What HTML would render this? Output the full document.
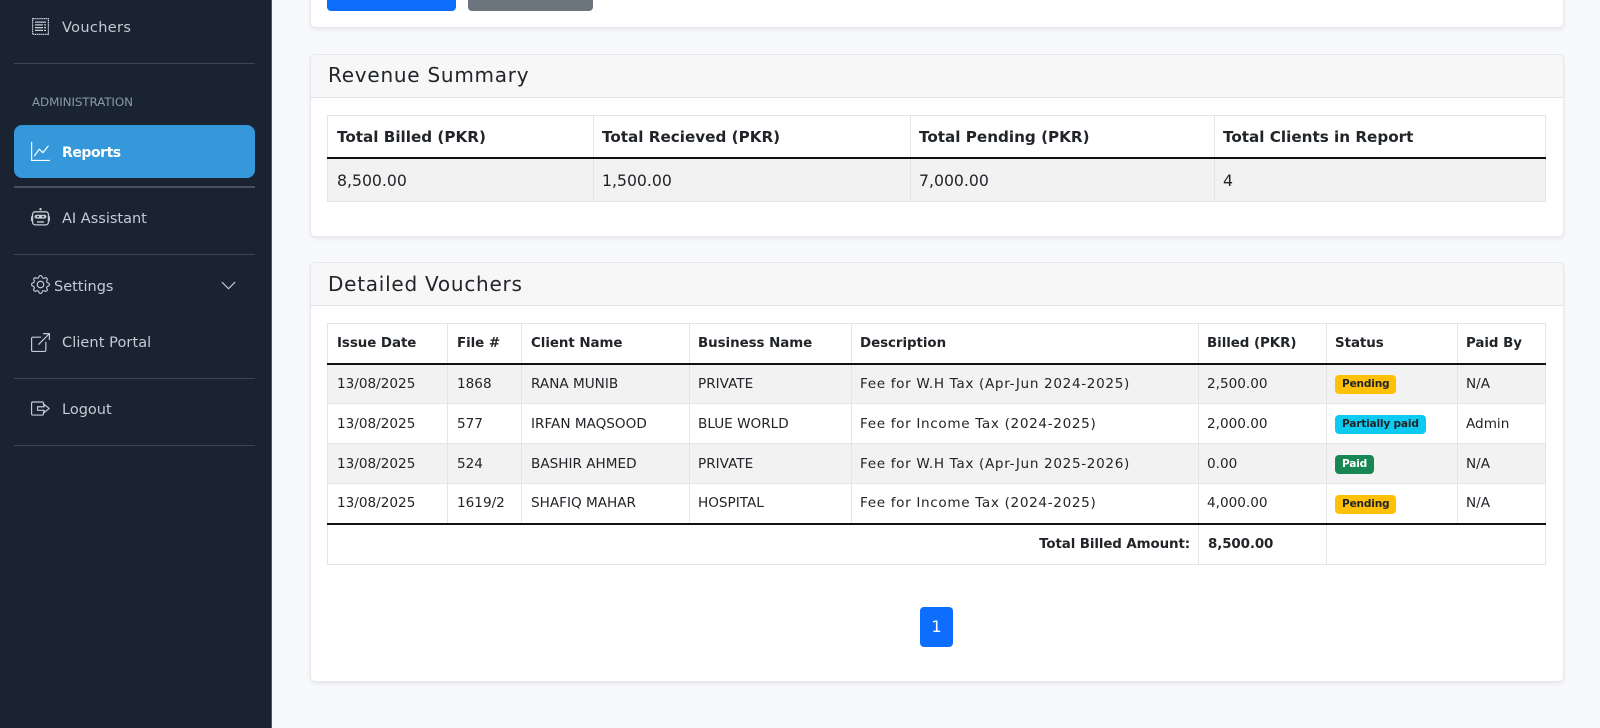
<!DOCTYPE html>
<html lang="en"><head><meta charset="utf-8"><title>Reports</title>
<style>
*{box-sizing:border-box}
html,body{margin:0;width:1600px;height:728px;overflow:hidden;background:#f8f9fc;font-family:"DejaVu Sans","Liberation Sans",sans-serif;color:#212529}
.abs{position:absolute}
#side{position:absolute;left:0;top:0;width:272px;height:728px;background:#1a2332;border-right:1px solid #4a5666}
.hr{position:absolute;left:14px;width:241px;height:1px;background:#3b4554}
.nav{position:absolute;font-size:14.5px;color:#c3cbd3;line-height:20px;white-space:nowrap}
.ic{position:absolute;fill:#c3cbd3}
.active{position:absolute;left:14px;top:125px;width:241px;height:53px;background:#3498db;border-radius:8px}
.card{position:absolute;left:310px;width:1254px;background:#fff;border:1px solid #e6e8ea;border-radius:5px;box-shadow:0 2px 4px rgba(0,0,0,.07)}
.ch{position:absolute;left:0;top:0;right:0;height:43px;background:#f7f7f7;border-bottom:1px solid #e3e4e6;border-radius:5px 5px 0 0;font-size:20px;line-height:41px;padding-left:17px;white-space:nowrap;letter-spacing:.75px}
table{position:absolute;border-collapse:collapse;table-layout:fixed;color:#212529}
th,td{border:1px solid #e3e6e9;padding:0 0 0 8px;text-align:left;white-space:nowrap;overflow:hidden;vertical-align:middle}
th:nth-child(-n+3),td:nth-child(-n+3){padding-left:9px}
th{font-weight:700}
.t1 th{font-size:15.2px;letter-spacing:0;height:42px;border-bottom:2px solid #111;padding-top:2px}
.t1 td{font-size:15.7px;height:44px;background:#f2f2f2;padding-top:2px}
.t1 th:nth-child(-n+4),.t1 td:nth-child(-n+4){padding-left:9px}
.t1 th:nth-child(n+2),.t1 td:nth-child(n+2){padding-left:8px}
.t2{font-size:13.6px}
.t2 th{font-size:13.4px;letter-spacing:-.05px;height:40px;border-bottom:2px solid #111}
.t2 td{height:40px}
.t2 tr.s td{background:#f2f2f2}
.t2 td.d{letter-spacing:.65px}
.t2 tfoot td{font-weight:700;font-size:13.4px;letter-spacing:-.1px;border-top:2px solid #111;height:41px}
.b{display:inline-block;height:19px;line-height:19px;border-radius:4px;font-size:10.6px;font-weight:700;padding:0 7px;letter-spacing:-.2px;vertical-align:middle;position:relative;top:1px}
.y{background:#ffc107;color:#212529}.c{background:#0dcaf0;color:#212529}.g{background:#198754;color:#fff}
</style></head><body>
<aside id="side">
 <svg class="ic" style="left:32px;top:18px" width="17" height="17" viewBox="0 0 17 17"><path fill="none" stroke="#c3cbd3" stroke-width="1.2" stroke-dasharray="1.4 .5" d="M.6.6h15.8v15.8H.6z"/><path d="M3 3.5h11v1.2H3zM3 6.3h8v1.2H3zM12 6.3h2v1.2h-2zM3 9h8v1.2H3zM12 9h2v1.2h-2zM3 11.8h8V13H3zM12 11.8h2V13h-2z"/></svg>
 <div class="nav" style="left:62px;top:18px;letter-spacing:.35px">Vouchers</div>
 <div class="hr" style="top:63px"></div>
 <div class="nav" style="left:32px;top:92px;font-size:11.9px;color:#8b98a5;letter-spacing:-.1px">ADMINISTRATION</div>
 <div class="active"></div>
 <svg class="ic" style="left:31px;top:142px;fill:#fff" width="19" height="19" viewBox="0 0 16 16"><path fill-rule="evenodd" d="M0 0h1v15h15v1H0zm14.817 3.113a.5.5 0 0 1 .07.704l-4.5 5.5a.5.5 0 0 1-.74.037L7.06 6.767l-3.656 5.027a.5.5 0 0 1-.808-.588l4-5.5a.5.5 0 0 1 .758-.06l2.609 2.61 4.15-5.073a.5.5 0 0 1 .704-.07"/></svg>
 <div class="nav" style="left:62px;top:143px;color:#fff;font-weight:700;font-size:14px;letter-spacing:-.45px">Reports</div>
 <div class="hr" style="top:186px;height:2px;background:#46505e"></div>
 <svg class="ic" style="left:31px;top:208px" width="19" height="19" viewBox="0 0 16 16"><path d="M7.5 0h1v2h-1z"/><circle cx="8" cy="1" r="1"/><path fill="none" stroke="#c3cbd3" stroke-width="1.1" d="M3.5 3.2h9c1.4 0 2.2 1.2 2.2 2.4v6.2c0 1.4-1 2.4-2.4 2.4H3.7c-1.4 0-2.4-1-2.4-2.4V5.6c0-1.3.9-2.4 2.2-2.4z"/><path d="M0 7h1v4H0zM15 7h1v4h-1z"/><path d="M4.6 5.7h6.8c1 0 1.6.8 1.6 1.6s-.7 1.6-1.6 1.6H4.6C3.7 8.9 3 8.2 3 7.3s.7-1.6 1.6-1.6zM5 11.2h6v1.1H5z"/><path fill="#1a2332" d="M5 6.8h1.7v1H5zM9.3 6.8H11v1H9.3z"/></svg>
 <div class="nav" style="left:62px;top:209px">AI Assistant</div>
 <div class="hr" style="top:254px"></div>
 <svg class="ic" style="left:31px;top:275px" width="19" height="19" viewBox="0 0 16 16"><path d="M8 4.754a3.246 3.246 0 1 0 0 6.492 3.246 3.246 0 0 0 0-6.492M5.754 8a2.246 2.246 0 1 1 4.492 0 2.246 2.246 0 0 1-4.492 0"/><path d="M9.796 1.343c-.527-1.79-3.065-1.79-3.592 0l-.094.319a.873.873 0 0 1-1.255.52l-.292-.16c-1.64-.892-3.433.902-2.54 2.541l.159.292a.873.873 0 0 1-.52 1.255l-.319.094c-1.79.527-1.79 3.065 0 3.592l.319.094a.873.873 0 0 1 .52 1.255l-.16.292c-.892 1.64.901 3.434 2.541 2.54l.292-.159a.873.873 0 0 1 1.255.52l.094.319c.527 1.79 3.065 1.79 3.592 0l.094-.319a.873.873 0 0 1 1.255-.52l.292.16c1.64.893 3.434-.902 2.54-2.541l-.159-.292a.873.873 0 0 1 .52-1.255l.319-.094c1.79-.527 1.79-3.065 0-3.592l-.319-.094a.873.873 0 0 1-.52-1.255l.16-.292c.893-1.64-.902-3.433-2.541-2.54l-.292.159a.873.873 0 0 1-1.255-.52zm-2.633.283c.246-.835 1.428-.835 1.674 0l.094.319a1.873 1.873 0 0 0 2.693 1.115l.291-.16c.764-.415 1.6.42 1.184 1.185l-.159.292a1.873 1.873 0 0 0 1.116 2.692l.318.094c.835.246.835 1.428 0 1.674l-.319.094a1.873 1.873 0 0 0-1.115 2.693l.16.291c.415.764-.42 1.6-1.185 1.184l-.291-.159a1.873 1.873 0 0 0-2.693 1.116l-.094.318c-.246.835-1.428.835-1.674 0l-.094-.319a1.873 1.873 0 0 0-2.692-1.115l-.292.16c-.764.415-1.6-.42-1.184-1.185l.159-.291A1.873 1.873 0 0 0 1.945 8.93l-.319-.094c-.835-.246-.835-1.428 0-1.674l.319-.094A1.873 1.873 0 0 0 3.06 4.377l-.16-.292c-.415-.764.42-1.6 1.185-1.184l.292.159a1.873 1.873 0 0 0 2.692-1.115z"/></svg>
 <div class="nav" style="left:54px;top:277px">Settings</div>
 <svg class="ic" style="left:220px;top:277px" width="17" height="17" viewBox="0 0 16 16"><path fill-rule="evenodd" d="M1.646 4.646a.5.5 0 0 1 .708 0L8 10.293l5.646-5.647a.5.5 0 0 1 .708.708l-6 6a.5.5 0 0 1-.708 0l-6-6a.5.5 0 0 1 0-.708"/></svg>
 <svg class="ic" style="left:31px;top:333px" width="19" height="19" viewBox="0 0 16 16"><path fill-rule="evenodd" d="M8.636 3.5a.5.5 0 0 0-.5-.5H1.5A1.5 1.5 0 0 0 0 4.5v10A1.5 1.5 0 0 0 1.5 16h10a1.5 1.5 0 0 0 1.5-1.5V7.864a.5.5 0 0 0-1 0V14.5a.5.5 0 0 1-.5.5h-10a.5.5 0 0 1-.5-.5v-10a.5.5 0 0 1 .5-.5h6.636a.5.5 0 0 0 .5-.5"/><path fill-rule="evenodd" d="M16 .5a.5.5 0 0 0-.5-.5h-5a.5.5 0 0 0 0 1h3.793L6.146 9.146a.5.5 0 1 0 .708.708L15 1.707V5.5a.5.5 0 0 0 1 0z"/></svg>
 <div class="nav" style="left:62px;top:333px;letter-spacing:.08px">Client Portal</div>
 <div class="hr" style="top:378px"></div>
 <svg class="ic" style="left:31px;top:399px;fill:none;stroke:#c3cbd3;stroke-width:1" width="19" height="19" viewBox="0 0 16 16"><path d="M10.5 5.5v-2a1 1 0 0 0-1-1h-8a1 1 0 0 0-1 1v9a1 1 0 0 0 1 1h8a1 1 0 0 0 1-1v-2"/><path stroke-linejoin="round" d="M5.5 6.5h5.6V4.6L15.3 8l-4.2 3.4V9.5H5.5z"/></svg>
 <div class="nav" style="left:62px;top:400px">Logout</div>
 <div class="hr" style="top:445px"></div>
</aside>

<div class="card" style="top:-20px;height:48px"></div>
<div class="abs" style="left:327px;top:-20px;width:129px;height:31px;background:#0d6efd;border-radius:4px"></div>
<div class="abs" style="left:468px;top:-20px;width:125px;height:31px;background:#6c757d;border-radius:4px"></div>

<section class="card" style="top:54px;height:183px"><div class="ch">Revenue Summary</div></section>
<table class="t1" style="left:327px;top:115px;width:1218px">
<colgroup><col style="width:266px"><col style="width:317px"><col style="width:304px"><col style="width:331px"></colgroup>
<thead><tr><th style="padding-left:9px">Total Billed (PKR)</th><th>Total Recieved (PKR)</th><th>Total Pending (PKR)</th><th>Total Clients in Report</th></tr></thead>
<tbody><tr><td style="padding-left:9px">8,500.00</td><td>1,500.00</td><td>7,000.00</td><td>4</td></tr></tbody>
</table>

<section class="card" style="top:262px;height:420px"><div class="ch" style="line-height:43px">Detailed Vouchers</div></section>
<table class="t2" style="left:327px;top:323px;width:1218px">
<colgroup><col style="width:120px"><col style="width:74px"><col style="width:168px"><col style="width:162px"><col style="width:347px"><col style="width:128px"><col style="width:131px"><col style="width:88px"></colgroup>
<thead><tr><th>Issue Date</th><th>File #</th><th>Client Name</th><th>Business Name</th><th>Description</th><th>Billed (PKR)</th><th>Status</th><th>Paid By</th></tr></thead>
<tbody>
<tr class="s"><td>13/08/2025</td><td>1868</td><td>RANA MUNIB</td><td>PRIVATE</td><td class="d">Fee for W.H Tax (Apr-Jun 2024-2025)</td><td>2,500.00</td><td><span class="b y">Pending</span></td><td>N/A</td></tr>
<tr><td>13/08/2025</td><td>577</td><td>IRFAN MAQSOOD</td><td>BLUE WORLD</td><td class="d">Fee for Income Tax (2024-2025)</td><td>2,000.00</td><td><span class="b c">Partially paid</span></td><td>Admin</td></tr>
<tr class="s"><td style="height:39px">13/08/2025</td><td>524</td><td>BASHIR AHMED</td><td>PRIVATE</td><td class="d">Fee for W.H Tax (Apr-Jun 2025-2026)</td><td>0.00</td><td><span class="b g">Paid</span></td><td>N/A</td></tr>
<tr><td>13/08/2025</td><td>1619/2</td><td>SHAFIQ MAHAR</td><td>HOSPITAL</td><td class="d">Fee for Income Tax (2024-2025)</td><td>4,000.00</td><td><span class="b y">Pending</span></td><td>N/A</td></tr>
</tbody>
<tfoot><tr><td colspan="5" style="text-align:right;padding-right:8px">Total Billed Amount:</td><td>8,500.00</td><td colspan="2"></td></tr></tfoot>
</table>
<div class="abs" style="left:920px;top:607px;width:33px;height:40px;background:#0d6efd;border-radius:4px;color:#fff;font-size:16px;line-height:40px;text-align:center">1</div>
</body></html>
